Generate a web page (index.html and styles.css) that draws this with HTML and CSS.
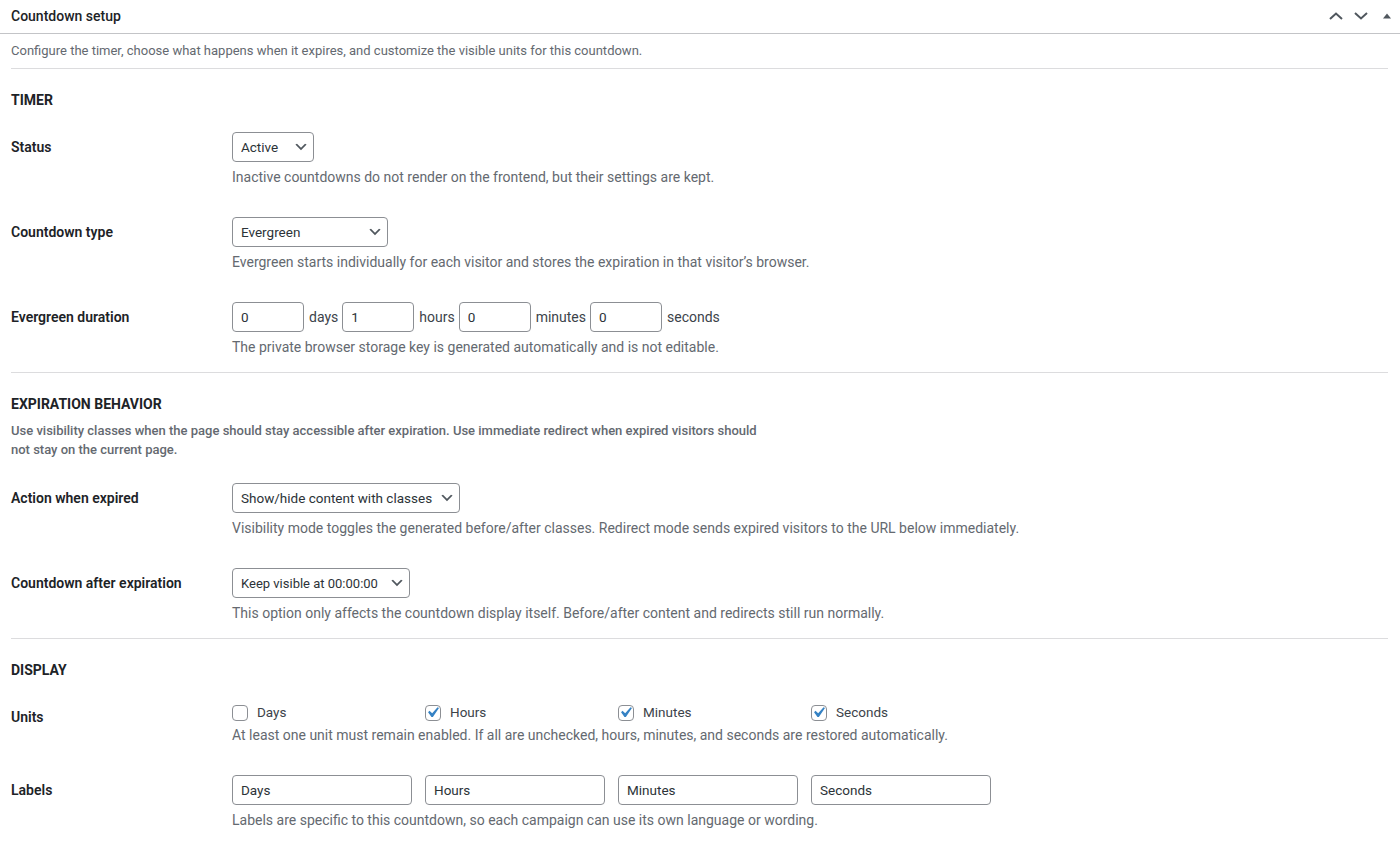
FILE: index.html
```html
<!DOCTYPE html>
<html lang="en">

<head>
  <meta charset="UTF-8">
  <meta name="viewport" content="width=device-width, initial-scale=1.0">
  <title>Countdown setup</title>
  <link rel="stylesheet" href="styles.css">
</head>

<body>

  <div class="postbox">
    <div class="postbox-header">
      <h2 class="hndle">Countdown setup</h2>
      <div class="handle-actions">
        <button type="button" class="handle-btn btn-up" aria-label="Move up">
          <svg width="14" height="8" viewBox="0 0 14 8"><polyline points="1,7 7,1.5 13,7" fill="none" stroke="#50575e" stroke-width="2"/></svg>
        </button>
        <button type="button" class="handle-btn" aria-label="Move down">
          <svg width="14" height="8" viewBox="0 0 14 8"><polyline points="1,1 7,6.5 13,1" fill="none" stroke="#50575e" stroke-width="2"/></svg>
        </button>
        <button type="button" class="handle-btn btn-toggle" aria-label="Toggle panel">
          <svg width="8" height="6" viewBox="0 0 8 6"><polygon points="0,5.5 4,0.5 8,5.5" fill="#50575e"/></svg>
        </button>
      </div>
    </div>

    <div class="inside">
      <p class="intro">Configure the timer, choose what happens when it expires, and customize the visible units for this countdown.</p>

      <!-- Timer -->
      <div class="section">
        <h3 class="section-title">Timer</h3>

        <div class="row">
          <label class="row-label" for="status">Status</label>
          <div class="row-field">
            <span class="select-wrap">
              <select id="status" class="select w-status">
                <option>Active</option>
                <option>Inactive</option>
              </select>
              <svg class="select-arrow" width="16" height="16" viewBox="0 0 20 20"><path d="M5 6l5 5 5-5 2 1-7 7-7-7 2-1z" fill="#50575e"/></svg>
            </span>
            <p class="description">Inactive countdowns do not render on the frontend, but their settings are kept.</p>
          </div>
        </div>

        <div class="row">
          <label class="row-label" for="type">Countdown type</label>
          <div class="row-field">
            <span class="select-wrap">
              <select id="type" class="select w-type">
                <option>Evergreen</option>
                <option>Fixed date</option>
              </select>
              <svg class="select-arrow" width="16" height="16" viewBox="0 0 20 20"><path d="M5 6l5 5 5-5 2 1-7 7-7-7 2-1z" fill="#50575e"/></svg>
            </span>
            <p class="description">Evergreen starts individually for each visitor and stores the expiration in that visitor’s browser.</p>
          </div>
        </div>

        <div class="row">
          <label class="row-label" for="days">Evergreen duration</label>
          <div class="row-field">
            <div class="duration">
              <input type="text" id="days" class="text-input small" value="0"><span class="unit">days</span>
              <input type="text" class="text-input small" value="1"><span class="unit">hours</span>
              <input type="text" class="text-input small" value="0"><span class="unit">minutes</span>
              <input type="text" class="text-input small" value="0"><span class="unit">seconds</span>
            </div>
            <p class="description">The private browser storage key is generated automatically and is not editable.</p>
          </div>
        </div>
      </div>

      <!-- Expiration -->
      <div class="section">
        <h3 class="section-title">Expiration behavior</h3>
        <p class="section-intro">Use visibility classes when the page should stay accessible after expiration. Use immediate redirect when expired visitors should not stay on the current page.</p>

        <div class="row">
          <label class="row-label" for="action">Action when expired</label>
          <div class="row-field">
            <span class="select-wrap">
              <select id="action" class="select w-action">
                <option>Show/hide content with classes</option>
                <option>Redirect immediately</option>
              </select>
              <svg class="select-arrow" width="16" height="16" viewBox="0 0 20 20"><path d="M5 6l5 5 5-5 2 1-7 7-7-7 2-1z" fill="#50575e"/></svg>
            </span>
            <p class="description">Visibility mode toggles the generated before/after classes. Redirect mode sends expired visitors to the URL below immediately.</p>
          </div>
        </div>

        <div class="row">
          <label class="row-label" for="after">Countdown after expiration</label>
          <div class="row-field">
            <span class="select-wrap">
              <select id="after" class="select w-after">
                <option>Keep visible at 00:00:00</option>
                <option>Hide countdown</option>
              </select>
              <svg class="select-arrow" width="16" height="16" viewBox="0 0 20 20"><path d="M5 6l5 5 5-5 2 1-7 7-7-7 2-1z" fill="#50575e"/></svg>
            </span>
            <p class="description">This option only affects the countdown display itself. Before/after content and redirects still run normally.</p>
          </div>
        </div>
      </div>

      <!-- Display -->
      <div class="section">
        <h3 class="section-title">Display</h3>

        <div class="row">
          <span class="row-label">Units</span>
          <div class="row-field">
            <div class="unit-grid checks">
              <label class="check">
                <span class="check-box"><input type="checkbox"></span>Days
              </label>
              <label class="check">
                <span class="check-box"><input type="checkbox" checked><svg class="check-mark" width="21" height="21" viewBox="0 0 20 20"><path d="M14.83 4.89l1.34.94-5.81 8.38H9.02L5.78 9.67l1.34-1.25 2.57 2.4z" fill="#3582c4"/></svg></span>Hours
              </label>
              <label class="check">
                <span class="check-box"><input type="checkbox" checked><svg class="check-mark" width="21" height="21" viewBox="0 0 20 20"><path d="M14.83 4.89l1.34.94-5.81 8.38H9.02L5.78 9.67l1.34-1.25 2.57 2.4z" fill="#3582c4"/></svg></span>Minutes
              </label>
              <label class="check">
                <span class="check-box"><input type="checkbox" checked><svg class="check-mark" width="21" height="21" viewBox="0 0 20 20"><path d="M14.83 4.89l1.34.94-5.81 8.38H9.02L5.78 9.67l1.34-1.25 2.57 2.4z" fill="#3582c4"/></svg></span>Seconds
              </label>
            </div>
            <p class="description desc-tight">At least one unit must remain enabled. If all are unchecked, hours, minutes, and seconds are restored automatically.</p>
          </div>
        </div>

        <div class="row">
          <span class="row-label">Labels</span>
          <div class="row-field">
            <div class="unit-grid">
              <input type="text" class="text-input" value="Days">
              <input type="text" class="text-input" value="Hours">
              <input type="text" class="text-input" value="Minutes">
              <input type="text" class="text-input" value="Seconds">
            </div>
            <p class="description">Labels are specific to this countdown, so each campaign can use its own language or wording.</p>
          </div>
        </div>
      </div>
    </div>
  </div>

</body>

</html>
```
FILE: styles.css
```css
body {
  margin: 0;
  font-family: Roboto, "Liberation Sans", sans-serif;
  font-size: 13px;
  color: #1d2327;
  background: #fff;
}

.postbox {
  background: #fff;
}

.postbox-header {
  display: flex;
  align-items: center;
  justify-content: space-between;
  height: 33px;
  border-bottom: 1px solid #c3c4c7;
  padding-left: 11px;
}

.hndle {
  margin: 0;
  font-size: 14px;
  font-weight: 500;
  line-height: 33px;
}

.handle-actions {
  display: flex;
  height: 33px;
}

.handle-btn {
  display: flex;
  align-items: center;
  justify-content: center;
  width: 26px;
  height: 33px;
  padding: 0;
  border: none;
  background: none;
  cursor: pointer;
}

.handle-btn.btn-up {
  width: 24px;
}

.handle-btn svg {
  margin-top: -1px;
}

.inside {
  padding: 0 12px 0 11px;
}

.intro {
  margin: 0;
  padding: 8px 0;
  line-height: 18px;
  color: #646970;
  border-bottom: 1px solid #dcdcde;
}

.section {
  padding: 21px 0 16px;
  border-bottom: 1px solid #dcdcde;
}

.section:last-child {
  border-bottom: none;
}

.section-title {
  margin: 0;
  font-size: 14px;
  font-weight: 700;
  line-height: 20px;
  text-transform: uppercase;
}

.section-intro {
  max-width: 760px;
  margin: 7px 0 0;
  line-height: 19px;
  font-weight: 500;
  color: #646970;
}

.section-title + .row {
  margin-top: 22px;
}

.section-intro + .row {
  margin-top: 24px;
}

.row {
  display: grid;
  grid-template-columns: 221px 1fr;
}

.row + .row {
  margin-top: 31px;
}

.row-label {
  font-size: 14px;
  font-weight: 600;
  line-height: 30px;
}

.description {
  margin: 6px 0 0;
  font-size: 14px;
  line-height: 18px;
  color: #646970;
}

.description.desc-tight {
  margin-top: 4px;
}

/* selects */
.select-wrap {
  position: relative;
  display: inline-block;
  vertical-align: top;
}

.select {
  appearance: none;
  -webkit-appearance: none;
  display: block;
  height: 30px;
  padding: 0 20px 0 8px;
  border: 1px solid #8c8f94;
  border-radius: 4px;
  background: #fff;
  font-family: inherit;
  font-size: 13.5px;
  color: #2c3338;
}

.select-arrow {
  position: absolute;
  right: 5px;
  top: 7px;
  pointer-events: none;
}

.w-status { width: 82px; }
.w-type { width: 156px; }
.w-action { width: 228px; }
.w-after { width: 178px; }

.w-after {
  font-size: 13px;
}

/* text inputs */
.text-input {
  box-sizing: border-box;
  height: 30px;
  padding: 0 8px;
  border: 1px solid #8c8f94;
  border-radius: 4px;
  font-family: inherit;
  font-size: 13.5px;
  color: #2c3338;
  background: #fff;
}

.text-input.small {
  width: 72px;
}

.duration {
  display: flex;
  align-items: center;
  height: 30px;
  font-size: 14px;
  color: #3c434a;
}

.unit {
  margin: 0 4px 0 5px;
}

.unit-grid {
  display: grid;
  grid-template-columns: repeat(4, 180px);
  column-gap: 13px;
}

.unit-grid .text-input {
  width: 180px;
}

/* checkboxes */
.checks {
  height: 20px;
  align-items: center;
}

.check {
  display: flex;
  align-items: center;
  gap: 9px;
  font-size: 13.5px;
  color: #3c434a;
}

.check-box {
  position: relative;
  width: 16px;
  height: 16px;
  margin-top: 1px;
}

.check-box input {
  appearance: none;
  -webkit-appearance: none;
  box-sizing: border-box;
  display: block;
  width: 16px;
  height: 16px;
  margin: 0;
  border: 1px solid #8c8f94;
  border-radius: 4px;
  background: #fff;
}

.check-mark {
  position: absolute;
  left: -3px;
  top: -3px;
  pointer-events: none;
}
```
